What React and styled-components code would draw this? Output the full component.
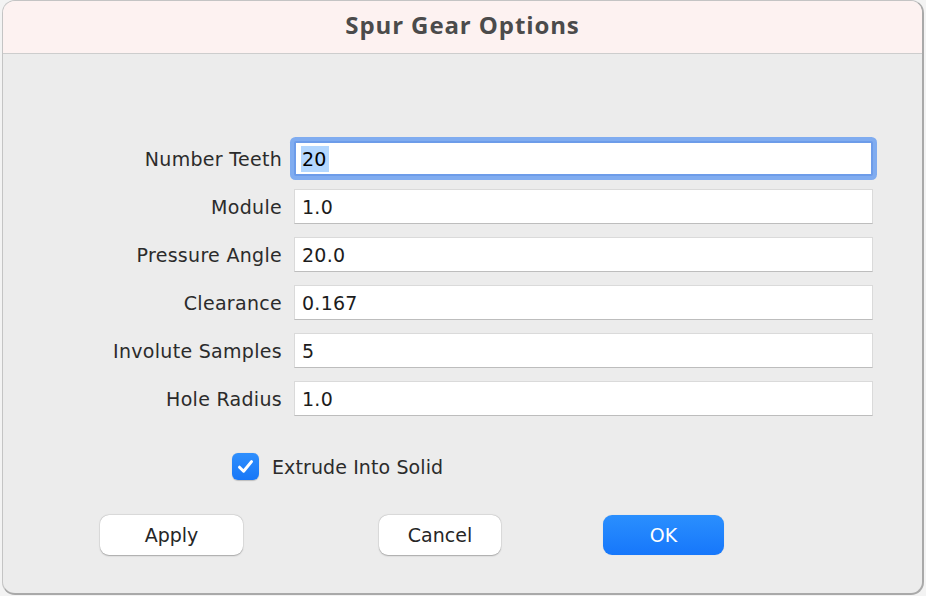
import React from "react"
import styled, { createGlobalStyle } from "styled-components"

const fields = [
  { label: "Number Teeth", value: "20", focused: true },
  { label: "Module", value: "1.0" },
  { label: "Pressure Angle", value: "20.0" },
  { label: "Clearance", value: "0.167" },
  { label: "Involute Samples", value: "5" },
  { label: "Hole Radius", value: "1.0" },
]

const GlobalStyle = createGlobalStyle`
  html, body {
    margin: 0;
    padding: 0;
    background: #f3f3f3;
  }
  body {
    font-family: "DejaVu Sans", "Liberation Sans", sans-serif;
  }
`

export default function App() {
  return (
    <>
      <GlobalStyle />
      <Dialog>
        <TitleBar>Spur Gear Options</TitleBar>
        <Body>
          <Form>
            {fields.map((f) => (
              <React.Fragment key={f.label}>
                <Label>{f.label}</Label>
                <Field $focused={f.focused}>
                  {f.focused ? <Selected>{f.value}</Selected> : f.value}
                </Field>
              </React.Fragment>
            ))}
          </Form>

          <CheckRow>
            <Checkbox>
              <svg width="17" height="15" viewBox="0 0 17 15">
                <path
                  d="M2.5 8.2 L6.6 12.2 L14.5 2.6"
                  fill="none"
                  stroke="#fff"
                  strokeWidth="3"
                  strokeLinecap="round"
                  strokeLinejoin="round"
                />
              </svg>
            </Checkbox>
            <CheckLabel>Extrude Into Solid</CheckLabel>
          </CheckRow>

          <ButtonRow>
            <Button $width={143}>Apply</Button>
            <Button $width={122} $gap={136}>Cancel</Button>
            <Button $width={121} $gap={102} $primary>OK</Button>
          </ButtonRow>
        </Body>
      </Dialog>
    </>
  )
}

const Dialog = styled.div`
  width: 919px;
  height: 592px;
  margin-left: 2px;
  display: flex;
  flex-direction: column;
  background: #ececec;
  border: 1px solid #c4c4c4;
  border-right: 2px solid #a9a9a9;
  border-bottom: 2px solid #a9a9a9;
  border-radius: 13px;
  overflow: hidden;
`

const TitleBar = styled.div`
  height: 53px;
  flex-shrink: 0;
  display: flex;
  align-items: center;
  justify-content: center;
  background: #fdf2f1;
  border-bottom: 1px solid #cdcdcd;
  color: #4b4b4b;
  font-family: "Open Sans", Inter, "Liberation Sans", sans-serif;
  font-weight: 700;
  font-size: 24px;
  letter-spacing: 0.9px;
  padding-bottom: 5px;
  box-sizing: border-box;
`

const Body = styled.div`
  display: flex;
  flex-direction: column;
  padding-top: 87px;
`

const Form = styled.div`
  display: grid;
  grid-template-columns: 279px 1fr;
  grid-auto-rows: 35px;
  column-gap: 12px;
  row-gap: 13px;
  padding-right: 49px;
`

const Label = styled.div`
  display: flex;
  align-items: center;
  justify-content: flex-end;
  font-size: 19px;
  letter-spacing: 0.3px;
  color: #2b2b2b;
  padding-top: 1px;
`

const Field = styled.div`
  display: flex;
  align-items: center;
  box-sizing: border-box;
  background: #fff;
  border: 1px solid #dadada;
  border-bottom-color: #bdbdbd;
  padding-left: ${(p) => (p.$focused ? "5px" : "7px")};
  font-size: 19px;
  letter-spacing: 0.25px;
  color: #1c1c1c;
  ${(p) =>
    p.$focused &&
    `
    border: 2px solid #6d9ce9;
    box-shadow: 0 0 0 4px #80acf0;
    border-radius: 2px;
  `}
`

const Selected = styled.span`
  background: #b3d7ff;
  color: #000;
  padding: 2px 2px 2px 1px;
`

const CheckRow = styled.div`
  display: flex;
  align-items: center;
  gap: 13px;
  margin-top: 37px;
  padding-left: 229px;
`

const Checkbox = styled.div`
  width: 27px;
  height: 27px;
  border-radius: 6px;
  background: linear-gradient(#2f8ffd, #1877f7);
  display: flex;
  align-items: center;
  justify-content: center;
  box-shadow: 0 0.5px 1px rgba(0, 0, 0, 0.2);
`

const CheckLabel = styled.span`
  font-size: 19px;
  letter-spacing: 0.1px;
  color: #2b2b2b;
`

const ButtonRow = styled.div`
  display: flex;
  margin-top: 35px;
  padding-left: 97px;
`

const Button = styled.div`
  width: ${(p) => p.$width}px;
  height: 40px;
  margin-left: ${(p) => p.$gap || 0}px;
  box-sizing: border-box;
  border-radius: 9px;
  display: flex;
  align-items: center;
  justify-content: center;
  font-size: 19px;
  color: ${(p) => (p.$primary ? "#fff" : "#262626")};
  background: ${(p) =>
    p.$primary ? "linear-gradient(#2a8ffe, #1677fb)" : "#ffffff"};
  box-shadow: ${(p) =>
    p.$primary
      ? "0 0 1px rgba(0,0,0,0.15)"
      : "0 0.5px 1.5px rgba(0,0,0,0.28), 0 0 0 0.5px rgba(0,0,0,0.06)"};
`
